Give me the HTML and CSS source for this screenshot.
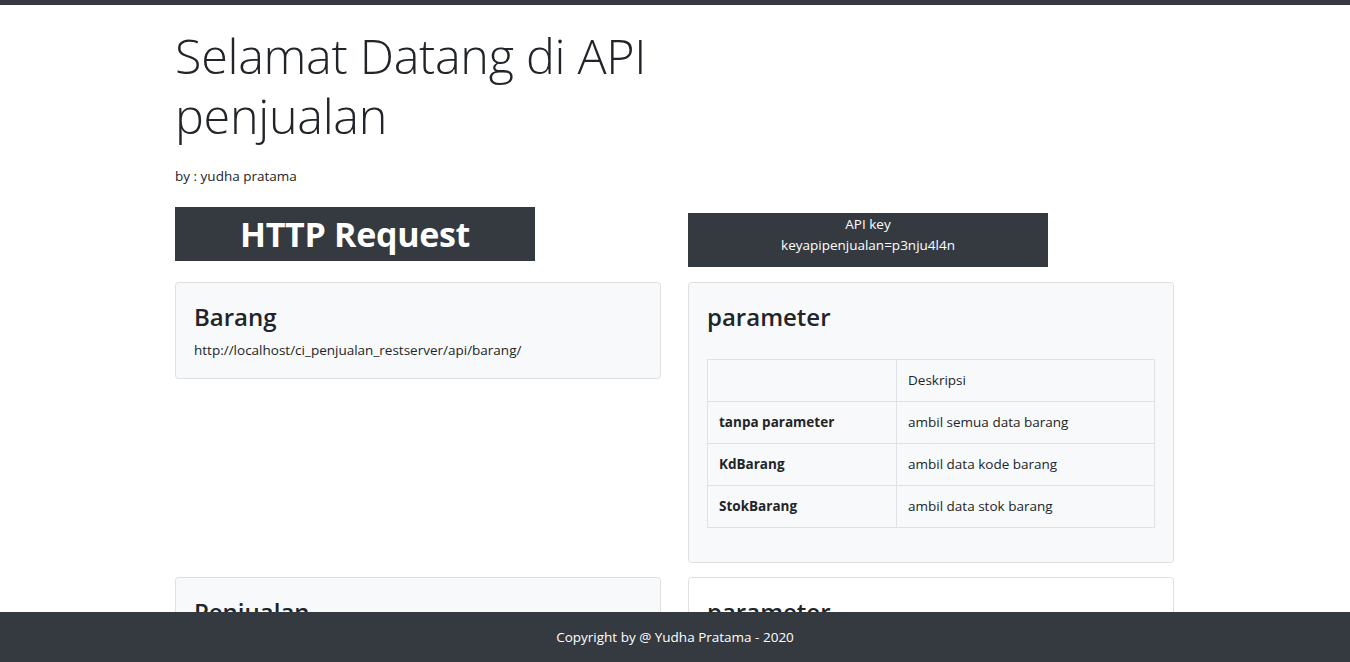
FILE: index.html
```html
<!DOCTYPE html>
<html lang="id">
<head>
<meta charset="utf-8">
<title>API penjualan</title>
<link rel="stylesheet" href="styles.css">
</head>
<body>
<div class="topbar"></div>
<main class="container">
  <h1 class="display">Selamat Datang di API penjualan</h1>
  <p class="byline">by : yudha pratama</p>
  <div class="grid">
    <div class="col">
      <h1 class="dark-box http">HTTP Request</h1>
    </div>
    <div class="col">
      <div class="dark-box apikey">API key<br>keyapipenjualan=p3nju4l4n</div>
    </div>

    <div class="card light short">
      <h3 class="card-title">Barang</h3>
      <p class="card-text">http://localhost/ci_penjualan_restserver/api/barang/</p>
    </div>
    <div class="card light">
      <h3 class="card-title">parameter</h3>
      <table class="table">
        <tr><td></td><td>Deskripsi</td></tr>
        <tr><th>tanpa parameter</th><td>ambil semua data barang</td></tr>
        <tr><th>KdBarang</th><td>ambil data kode barang</td></tr>
        <tr><th>StokBarang</th><td>ambil data stok barang</td></tr>
      </table>
    </div>

    <div class="card light short">
      <h3 class="card-title">Penjualan</h3>
      <p class="card-text">http://localhost/ci_penjualan_restserver/api/penjualan/</p>
    </div>
    <div class="card white">
      <h3 class="card-title">parameter</h3>
      <table class="table">
        <tr><td></td><td>Deskripsi</td></tr>
        <tr><th>tanpa parameter</th><td>ambil semua data penjualan</td></tr>
      </table>
    </div>
  </div>
</main>
<footer class="footer">Copyright by @ Yudha Pratama - 2020</footer>
</body>
</html>
```

FILE: styles.css
```css
* { box-sizing: border-box; }
html, body { margin: 0; padding: 0; }
body {
  font-family: "Open Sans", "Noto Sans", sans-serif;
  font-size: 13.5px;
  line-height: 21px;
  color: #212529;
  background: #fff;
}
.topbar { height: 5px; background: #343a40; }
.container {
  width: 1000px;
  margin: 0 auto;
  padding-bottom: 60px;
}
.display {
  font-weight: 300;
  font-size: 48.5px;
  line-height: 60px;
  margin: 20px 0 0 0;
  width: 500px;
  letter-spacing: -0.3px;
}
.byline { margin: 21px 0 0 0; }
.grid {
  display: grid;
  grid-template-columns: 486px 486px;
  column-gap: 27px;
  align-items: start;
  margin-top: 20px;
}
.col { min-height: 75px; }
.dark-box {
  background: #343a40;
  color: #fff;
  width: 360px;
  text-align: center;
  margin: 0;
}
.http {
  font-size: 34px;
  font-weight: 700;
  line-height: 42px;
  padding: 6px 0;
  letter-spacing: -0.3px;
}
.apikey {
  margin-top: 6px;
  padding: 1px 0 11px;
  line-height: 21px;
}
.card {
  border: 1px solid #dfdfdf;
  border-radius: 3.5px;
  padding: 19px 18px 17px;
  margin-bottom: 14px;
}
.light { background: #f8f9fa; }
.white { background: #fff; }
.card-title {
  font-size: 24px;
  font-weight: 600;
  line-height: 29px;
  margin: 0 0 9px 0;
}
.card-text { margin: 0; }
.table {
  width: 100%;
  border-collapse: collapse;
  margin-top: 28px;
  margin-bottom: 17px;
}
.table th, .table td {
  border: 1px solid #dee2e6;
  padding: 10px 11px;
  text-align: left;
  height: 42px;
  vertical-align: middle;
}
.table th { font-weight: 700; width: 189px; }
.footer {
  position: fixed;
  left: 0; right: 0; bottom: 0;
  height: 50px;
  background: #343a40;
  color: #fff;
  text-align: center;
  line-height: 50px;
}
```
